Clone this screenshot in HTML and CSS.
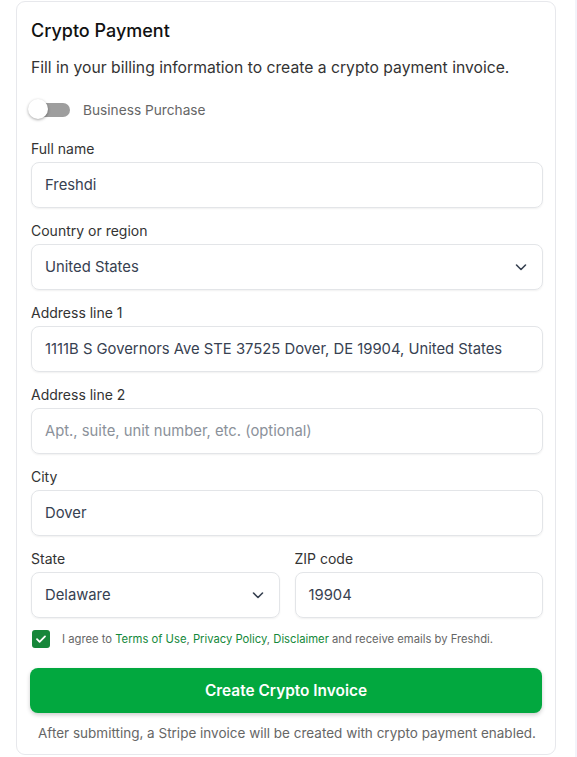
FILE: index.html
```html
<!DOCTYPE html>
<html lang="en">
<head>
<meta charset="utf-8">
<title>Crypto Payment</title>
<link rel="stylesheet" href="styles.css">
</head>
<body>
<div class="card">
  <h2 class="title">Crypto Payment</h2>
  <p class="subtitle">Fill in your billing information to create a crypto payment invoice.</p>
  <div class="toggle-row">
    <span class="switch"><span class="track"></span><span class="knob"></span></span>
    <span class="toggle-label">Business Purchase</span>
  </div>
  <div class="field">
    <label class="label">Full name</label>
    <div class="input">Freshdi</div>
  </div>
  <div class="field">
    <label class="label">Country or region</label>
    <div class="input select">United States
      <svg class="chev" width="14" height="14" viewBox="0 0 14 14"><path d="M2.5 5l4.5 4.5 4.5-4.5" fill="none" stroke="#374151" stroke-width="1.6" stroke-linecap="round" stroke-linejoin="round"/></svg>
    </div>
  </div>
  <div class="field">
    <label class="label">Address line 1</label>
    <div class="input">1111B S Governors Ave STE 37525 Dover, DE 19904, United States</div>
  </div>
  <div class="field">
    <label class="label">Address line 2</label>
    <div class="input placeholder">Apt., suite, unit number, etc. (optional)</div>
  </div>
  <div class="field">
    <label class="label">City</label>
    <div class="input">Dover</div>
  </div>
  <div class="row">
    <div class="field">
      <label class="label">State</label>
      <div class="input select">Delaware
        <svg class="chev" width="14" height="14" viewBox="0 0 14 14"><path d="M2.5 5l4.5 4.5 4.5-4.5" fill="none" stroke="#374151" stroke-width="1.6" stroke-linecap="round" stroke-linejoin="round"/></svg>
      </div>
    </div>
    <div class="field">
      <label class="label">ZIP code</label>
      <div class="input">19904</div>
    </div>
  </div>
  <div class="agree">
    <span class="checkbox"><svg width="12" height="12" viewBox="0 0 12 12"><path d="M2 6.2l2.6 2.6L10 3.4" fill="none" stroke="#fff" stroke-width="1.8" stroke-linecap="round" stroke-linejoin="round"/></svg></span>
    <span class="agree-text">I agree to <a class="link">Terms of Use</a>, <a class="link">Privacy Policy</a>, <a class="link">Disclaimer</a> and receive emails by Freshdi.</span>
  </div>
  <button class="btn">Create Crypto Invoice</button>
  <p class="note">After submitting, a Stripe invoice will be created with crypto payment enabled.</p>
</div>
</body>
</html>
```

FILE: styles.css
```css
html {
  background: linear-gradient(to right, #fff 0, #fff 575px, #f3f3fa 575px);
  min-height: 100%;
}
body {
  margin: 0;
  padding: 1px 0 0 16px;
  font-family: Inter, "Noto Sans", sans-serif;
  color: #1f2328;
}
.card {
  width: 512px;
  height: 752px;
  border: 1px solid #e7e8ec;
  border-radius: 9px;
  padding: 0 12px 0 14px;
  background: #fff;
}
.title {
  margin: 17px 0 0;
  font-size: 18px;
  font-weight: 500;
  line-height: 24px;
  color: #111;
}
.subtitle {
  margin: 13px 0 0;
  font-size: 15.7px;
  line-height: 24px;
  color: #333;
}
.toggle-row {
  display: flex;
  align-items: center;
  margin-top: 18px;
  height: 24px;
}
.switch {
  position: relative;
  width: 44px;
  height: 24px;
  margin-left: -3px;
  display: inline-block;
}
.track {
  position: absolute;
  left: 6px;
  top: 5px;
  width: 36px;
  height: 14px;
  border-radius: 7px;
  background: #9e9e9e;
}
.knob {
  position: absolute;
  left: 0;
  top: 1px;
  width: 20px;
  height: 20px;
  border-radius: 50%;
  background: #fff;
  box-shadow: 0 1px 3px rgba(0,0,0,0.35);
}
.toggle-label {
  margin-left: 11px;
  font-size: 13.7px;
  color: #666;
}
.field {
  display: flex;
  flex-direction: column;
  margin-top: 13px;
}
.toggle-row + .field {
  margin-top: 17px;
}
.label {
  font-size: 14px;
  line-height: 20px;
  color: #333;
  margin-bottom: 3px;
}
.input {
  box-sizing: border-box;
  height: 46px;
  border: 1px solid #e3e5e8;
  border-radius: 8px;
  box-shadow: 0 1px 2px rgba(0,0,0,0.06);
  padding: 0 14px 0 13px;
  display: flex;
  align-items: center;
  font-size: 14.8px;
  color: #374151;
  white-space: nowrap;
}
.placeholder {
  color: #8b919a;
}
.select {
  justify-content: space-between;
}
.row {
  display: grid;
  grid-template-columns: 1fr 1fr;
  gap: 15px;
}
.agree {
  display: flex;
  align-items: center;
  margin-top: 11px;
  height: 20px;
}
.checkbox {
  width: 18px;
  height: 18px;
  margin-left: 1px;
  border-radius: 3px;
  background: #17873a;
  display: flex;
  align-items: center;
  justify-content: center;
}
.agree-text {
  margin-left: 12px;
  font-size: 11.25px;
  color: #666;
}
.link {
  color: #13883a;
  text-decoration: none;
}
.btn {
  display: block;
  width: 512px;
  height: 45px;
  margin: 19px 0 0 -1px;
  border: none;
  border-radius: 8px;
  background: #02a83f;
  color: #fff;
  font-family: Inter, "Noto Sans", sans-serif;
  font-size: 15.4px;
  font-weight: 600;
  box-shadow: 0 2px 4px rgba(0,0,0,0.2);
}
.note {
  margin: 10px 0 0;
  text-align: center;
  font-size: 13.5px;
  line-height: 20px;
  color: #666;
  white-space: nowrap;
}
```
